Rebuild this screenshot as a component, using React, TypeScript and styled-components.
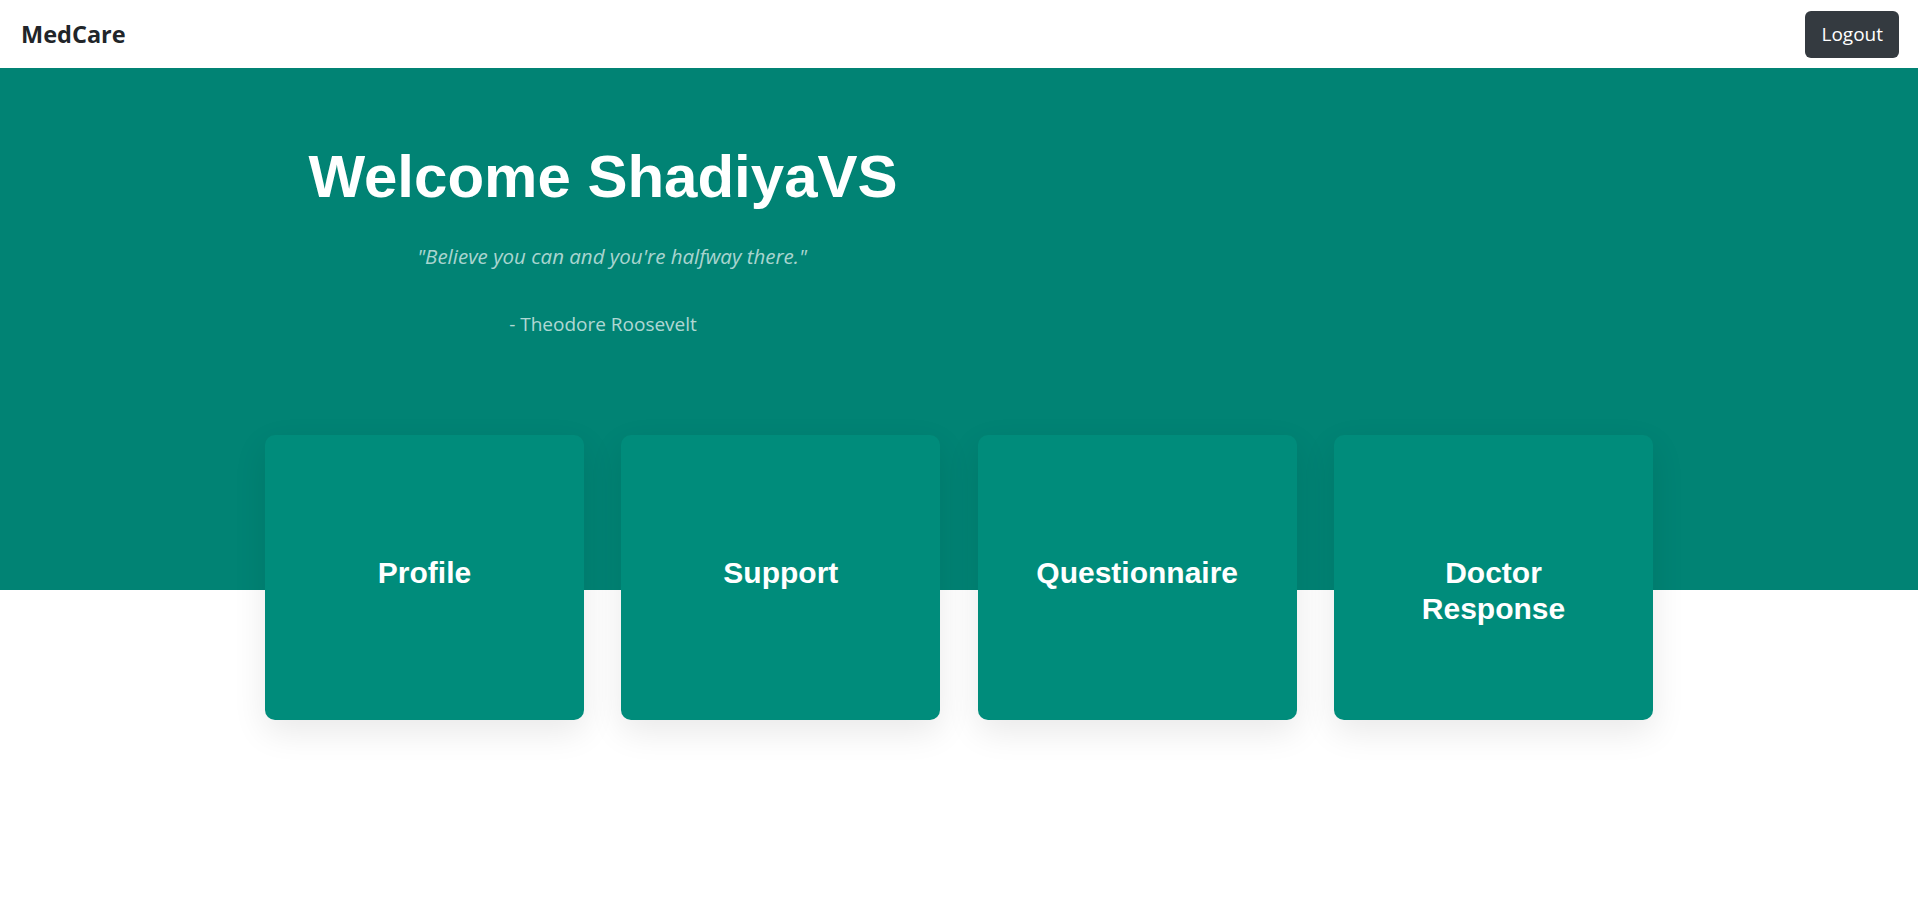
import styled, { createGlobalStyle } from "styled-components";

const GlobalStyle = createGlobalStyle`
  html, body {
    margin: 0;
    padding: 0;
    background: #ffffff;
  }
  * {
    box-sizing: border-box;
  }
`;

const Page = styled.div`
  min-height: 905px;
  font-family: "Open Sans", "Noto Sans", sans-serif;
`;

const NavBar = styled.nav`
  height: 68px;
  display: flex;
  align-items: center;
  justify-content: space-between;
  padding: 0 19px 0 21px;
  background: #ffffff;
`;

const Brand = styled.span`
  font-size: 23.5px;
  font-weight: 700;
  color: #212529;
`;

const LogoutButton = styled.button`
  height: 47px;
  padding: 0 16px;
  border: none;
  border-radius: 6px;
  background: #343a40;
  color: #ffffff;
  font-family: "Open Sans", "Noto Sans", sans-serif;
  font-size: 19px;
  cursor: pointer;
`;

const Hero = styled.section`
  background: linear-gradient(to bottom, #018374 0, #018374 522px, #ffffff 522px);
  padding-top: 73px;
`;

const HeroInner = styled.div`
  width: 1388px;
  margin: 0 auto;
`;

const Intro = styled.div`
  width: 676px;
  text-align: center;
`;

const Title = styled.h1`
  margin: 0;
  font-family: "Liberation Sans", Arial, sans-serif;
  font-size: 60px;
  line-height: 72px;
  font-weight: 700;
  color: #ffffff;
`;

const Quote = styled.p`
  margin: 29px 0 0;
  padding-left: 18px;
  font-size: 20.5px;
  line-height: 28px;
  font-style: italic;
  color: rgba(255, 255, 255, 0.68);
`;

const Author = styled.p`
  margin: 40px 0 0;
  font-size: 19px;
  line-height: 28px;
  color: rgba(255, 255, 255, 0.7);
`;

const CardRow = styled.div`
  margin-top: 97px;
  display: grid;
  grid-template-columns: repeat(4, 319px);
  justify-content: space-between;
`;

const Card = styled.a`
  height: 285px;
  padding: 120px 40px 0;
  border-radius: 10px;
  background: #008c7b;
  box-shadow: 0 12px 34px rgba(0, 0, 0, 0.09);
  text-align: center;
  text-decoration: none;
  cursor: pointer;
`;

const CardTitle = styled.h3`
  margin: 0;
  font-family: "Liberation Sans", Arial, sans-serif;
  font-size: 30px;
  line-height: 36px;
  font-weight: 700;
  color: #ffffff;
`;

const cards = ["Profile", "Support", "Questionnaire", "Doctor Response"];

export default function App() {
  return (
    <Page>
      <GlobalStyle />
      <NavBar>
        <Brand>MedCare</Brand>
        <LogoutButton>Logout</LogoutButton>
      </NavBar>
      <Hero>
        <HeroInner>
          <Intro>
            <Title>Welcome ShadiyaVS</Title>
            <Quote>"Believe you can and you're halfway there."</Quote>
            <Author>- Theodore Roosevelt</Author>
          </Intro>
          <CardRow>
            {cards.map((c) => (
              <Card key={c}>
                <CardTitle>{c}</CardTitle>
              </Card>
            ))}
          </CardRow>
        </HeroInner>
      </Hero>
    </Page>
  );
}
